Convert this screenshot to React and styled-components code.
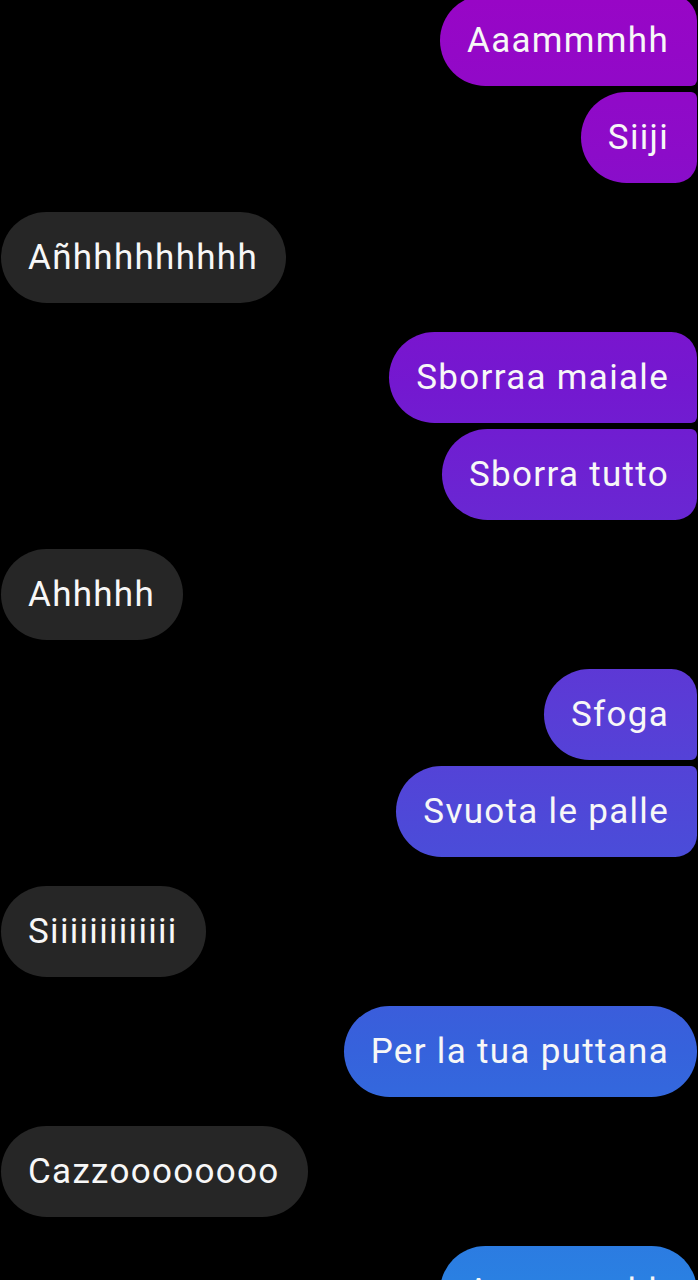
import React from "react";
import styled, { createGlobalStyle, css } from "styled-components";

const Global = createGlobalStyle`
  html, body { margin: 0; padding: 0; background: #000; }
  body { font-family: Roboto, "Noto Sans", "Liberation Sans", sans-serif; overflow: hidden; }
`;

const Screen = styled.div`
  width: 698px;
  height: 1280px;
  background: #000;
  overflow: hidden;
`;

const Thread = styled.div`
  display: flex;
  flex-direction: column;
  gap: 29px;
  margin-top: -5px;
  padding: 0 1px 0 1px;
`;

const Group = styled.div`
  display: flex;
  flex-direction: column;
  gap: 6px;
  align-items: ${(p) => (p.$mine ? "flex-end" : "flex-start")};
`;

const Bubble = styled.div`
  box-sizing: border-box;
  height: 91px;
  padding: 0 28px 0 27px;
  display: flex;
  align-items: center;
  font-size: 35px;
  letter-spacing: 1.3px;
  color: #f7f7f7;
  white-space: nowrap;
  border-radius: 46px;
  ${(p) =>
    p.$mine
      ? css`
          background-image: linear-gradient(
            180deg,
            #9806c6 0%,
            #8c0cc9 12%,
            #7418d0 30%,
            #5a3cd6 55%,
            #3662dc 82%,
            #2a80e2 100%
          );
          background-attachment: fixed;
          background-size: 698px 1280px;
          ${p.$pos === "first" &&
          css`
            border-top-right-radius: 26px;
            border-bottom-right-radius: 6px;
          `}
          ${p.$pos === "last" &&
          css`
            border-top-right-radius: 6px;
            border-bottom-right-radius: 22px;
          `}
        `
      : css`
          background: #262626;
        `}
`;

const groups = [
  { mine: true, msgs: ["Aaammmhh", "Siiji"] },
  { mine: false, msgs: ["Añhhhhhhhhh"] },
  { mine: true, msgs: ["Sborraa maiale", "Sborra tutto"] },
  { mine: false, msgs: ["Ahhhhh"] },
  { mine: true, msgs: ["Sfoga", "Svuota le palle"] },
  { mine: false, msgs: ["Siiiiiiiiiiiii"] },
  { mine: true, msgs: ["Per la tua puttana"] },
  { mine: false, msgs: ["Cazzoooooooo"] },
  { mine: true, msgs: ["Aaammmhh"] },
];

export default function App() {
  return (
    <Screen>
      <Global />
      <Thread>
        {groups.map((g, gi) => (
          <Group key={gi} $mine={g.mine}>
            {g.msgs.map((m, i) => {
              const pos =
                g.msgs.length === 1 ? "single" : i === 0 ? "first" : "last";
              return (
                <Bubble key={i} $mine={g.mine} $pos={pos}>
                  {m}
                </Bubble>
              );
            })}
          </Group>
        ))}
      </Thread>
    </Screen>
  );
}
